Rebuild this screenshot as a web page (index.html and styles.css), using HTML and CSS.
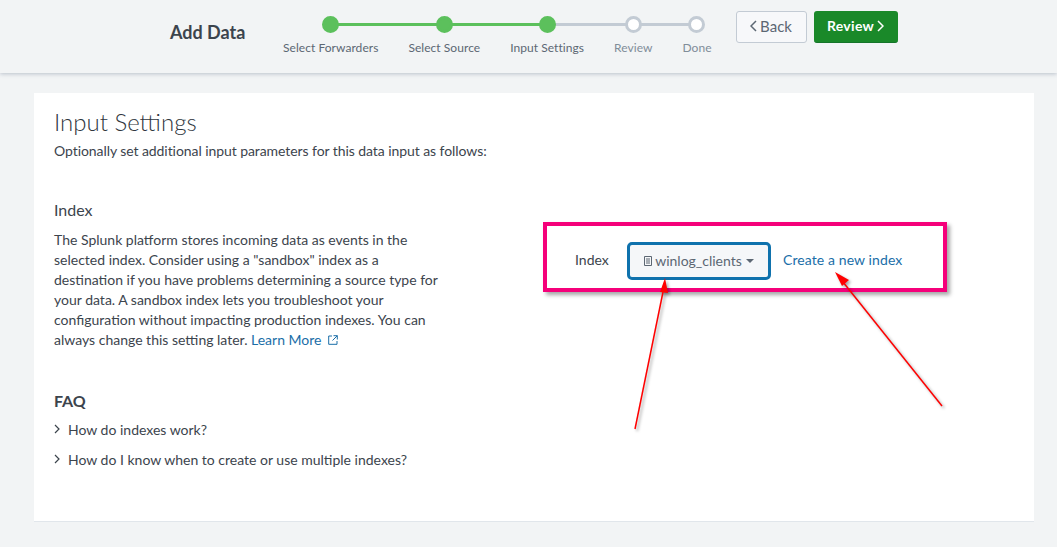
FILE: index.html
```html
<!DOCTYPE html>
<html lang="en">
<head>
  <meta charset="UTF-8" />
  <meta name="viewport" content="width=device-width, initial-scale=1.0"/>
  <title>Add Data - Input Settings</title>
  <link rel="stylesheet" href="styles.css">
</head>
<body>
  <header class="topbar">
    <div class="page-title">Add Data</div>
    <ol class="steps">
      <li class="step done"><span class="dot"></span>Select Forwarders</li>
      <li class="step done"><span class="dot"></span>Select Source</li>
      <li class="step current"><span class="dot"></span>Input Settings</li>
      <li class="step"><span class="dot"></span>Review</li>
      <li class="step"><span class="dot"></span>Done</li>
    </ol>
    <div class="actions">
      <button class="btn btn-back">
        <svg class="chev" width="7" height="12" viewBox="0 0 7 12"><path d="M6 1 1 6l5 5"/></svg>Back
      </button>
      <button class="btn btn-next">Review<svg class="chev" width="7" height="12" viewBox="0 0 7 12"><path d="m1 1 5 5-5 5"/></svg></button>
    </div>
  </header>

  <main class="card">
    <h1>Input Settings</h1>
    <p class="lead">Optionally set additional input parameters for this data input as follows:</p>

    <div class="columns">
      <section class="help">
        <h2>Index</h2>
        <p>The Splunk platform stores incoming data as events in the selected index. Consider using a "sandbox" index as a destination if you have problems determining a source type for your data. A sandbox index lets you troubleshoot your configuration without impacting production indexes. You can always change this setting later. <a href="#" class="learn">Learn More<svg width="10" height="10" viewBox="0 0 10 10"><path d="M4 1H.7v8.300h8.300V6M5.500.7h3.800v3.800M9.300.7 4.500 5.500"/></svg></a></p>

        <h3>FAQ</h3>
        <ul class="faq">
          <li><svg width="6" height="10" viewBox="0 0 6 10"><path d="m1 1 4 4-4 4"/></svg>How do indexes work?</li>
          <li><svg width="6" height="10" viewBox="0 0 6 10"><path d="m1 1 4 4-4 4"/></svg>How do I know when to create or use multiple indexes?</li>
        </ul>
      </section>

      <section class="index-box">
        <span class="field-label">Index</span>
        <button class="select">
          <svg width="8" height="10" viewBox="0 0 8 10"><path d="M.5.500h7v9h-7zM2 3h4M2 5h4M2 7h4"/></svg>winlog_clients<span class="caret"></span>
        </button>
        <a href="#" class="new-index">Create a new index</a>
      </section>
    </div>
  </main>

  <!-- annotation arrows drawn on top of the screenshot -->
  <svg class="arrows" width="1057" height="547" viewBox="0 0 1057 547">
    <g class="arrow">
      <path d="M635 429 663 292"/>
      <polygon points="665,278 668,293 660,292"/>
      <path d="M942 406 843 282"/>
      <polygon points="835,272 849,280 842,286"/>
    </g>
  </svg>
</body>
</html>
```

FILE: styles.css
```css
* {
  box-sizing: border-box;
}
body {
  margin: 0;
  height: 547px;
  overflow: hidden;
  font-family: Lato, "Liberation Sans", sans-serif;
  font-size: 14px;
  color: #3c444d;
  background-color: #f2f4f5;
}
a {
  color: #1a6ea8;
  text-decoration: none;
}

/* top bar */
.topbar {
  display: flex;
  height: 73px;
  padding-left: 170px;
  background-color: #f2f4f5;
  box-shadow: 0 1px 4px rgba(60, 80, 110, 0.3);
}
.page-title {
  width: 98px;
  margin-top: 21px;
  font-size: 18px;
  font-weight: 700;
  line-height: 22px;
  color: #3c444d;
}
.steps {
  display: flex;
  margin: 16px 0 0;
  padding: 0;
  list-style: none;
}
.step {
  position: relative;
  display: flex;
  flex-direction: column;
  align-items: center;
  padding: 0 15px;
  font-size: 12px;
  letter-spacing: 0.05px;
  line-height: 16px;
  color: #818d99;
}
.step.done, .step.current {
  color: #5c6773;
}
.dot {
  position: relative;
  z-index: 1;
  width: 17px;
  height: 17px;
  margin-bottom: 7px;
  border: 3px solid #c3cbd4;
  border-radius: 50%;
  background-color: #fff;
}
.done .dot, .current .dot {
  border-color: #5cc05c;
  background-color: #5cc05c;
}
.step::before, .step::after {
  content: "";
  position: absolute;
  top: 7px;
  width: 50%;
  height: 3px;
  background-color: #c3cbd4;
}
.step::before {
  left: 0;
}
.step::after {
  right: 0;
}
.done::before, .done::after, .current::before {
  background-color: #5cc05c;
}
.step:first-child::before, .step:last-child::after {
  display: none;
}
.actions {
  display: flex;
  gap: 7px;
  margin: 11px 0 0 9px;
}
.btn {
  display: flex;
  align-items: center;
  justify-content: center;
  gap: 3px;
  height: 32px;
  padding: 0 0 2px;
  border-radius: 3px;
  font-family: inherit;
  font-size: 14px;
}
.chev {
  fill: none;
  stroke: currentColor;
  stroke-width: 1.500;
}
.btn-back {
  width: 71px;
  border: 1px solid #c3cbd4;
  background-color: #f7f8fa;
  color: #5c6773;
  font-weight: 400;
  font-size: 15px;
}
.btn-next {
  width: 84px;
  border: none;
  border-bottom: 1px solid #15752a;
  background-color: #1a8929;
  color: #fff;
  font-weight: 700;
  letter-spacing: 0.3px;
}

/* main card */
.card {
  height: 429px;
  margin: 20px 23px 0 34px;
  padding: 15px 20px 0;
  background-color: #fff;
  border-bottom: 1px solid #e1e6eb;
}
h1 {
  margin: 0;
  font-size: 24px;
  font-weight: 300;
  line-height: 28px;
  color: #2f363d;
}
.lead {
  margin: 5px 0 0;
  letter-spacing: -0.07px;
  line-height: 20px;
}
.columns {
  display: flex;
  margin-top: 39px;
}
.help {
  width: 386px;
  flex: none;
}
h2 {
  margin: 0 0 10px;
  font-size: 16px;
  font-weight: 400;
  line-height: 20px;
}
.help p {
  margin: 0;
  line-height: 20px;
}
.learn svg {
  margin-left: 6px;
  fill: none;
  stroke: currentColor;
}
h3 {
  margin: 41px 0 0;
  font-size: 16px;
  font-weight: 700;
  line-height: 20px;
}
.faq {
  margin: 8px 0 0;
  padding: 0;
  list-style: none;
}
.faq li {
  display: flex;
  align-items: center;
  gap: 8px;
  height: 20px;
  margin-bottom: 10px;
}
.faq svg {
  fill: none;
  stroke: #3c444d;
  stroke-width: 1.200;
}

/* highlighted index field */
.index-box {
  display: flex;
  align-items: center;
  width: 404px;
  height: 70px;
  margin: 22px 0 0 103px;
  padding-left: 28px;
  border: 4px solid #f5007a;
  box-shadow: 3px 3px 4px rgba(0, 0, 0, 0.35);
}
.field-label {
  width: 52px;
  margin-top: 5px;
}
.select {
  display: flex;
  align-items: center;
  justify-content: center;
  gap: 3px;
  width: 144px;
  height: 38px;
  margin-top: 8px;
  padding: 0 0 1px;
  border: 3px solid #0f72ad;
  border-radius: 5px;
  background-color: #f5f7f9;
  font-family: inherit;
  font-size: 14px;
  color: #5c6773;
}
.select svg {
  fill: none;
  stroke: #5c6773;
}
.caret {
  width: 0;
  height: 0;
  margin-left: 1px;
  border: 4px solid transparent;
  border-top: 4px solid #5c6773;
  border-bottom: none;
}
.new-index {
  margin-left: 12px;
  margin-top: 5px;
  letter-spacing: 0.1px;
}

/* red arrows */
.arrows {
  position: absolute;
  top: 0;
  left: 0;
  pointer-events: none;
}
.arrow {
  filter: drop-shadow(2px 2px 1.500px rgba(0, 0, 0, 0.35));
}
.arrow path {
  fill: none;
  stroke: #ff0000;
  stroke-width: 1.500;
}
.arrow polygon {
  fill: #ff0000;
}
```
